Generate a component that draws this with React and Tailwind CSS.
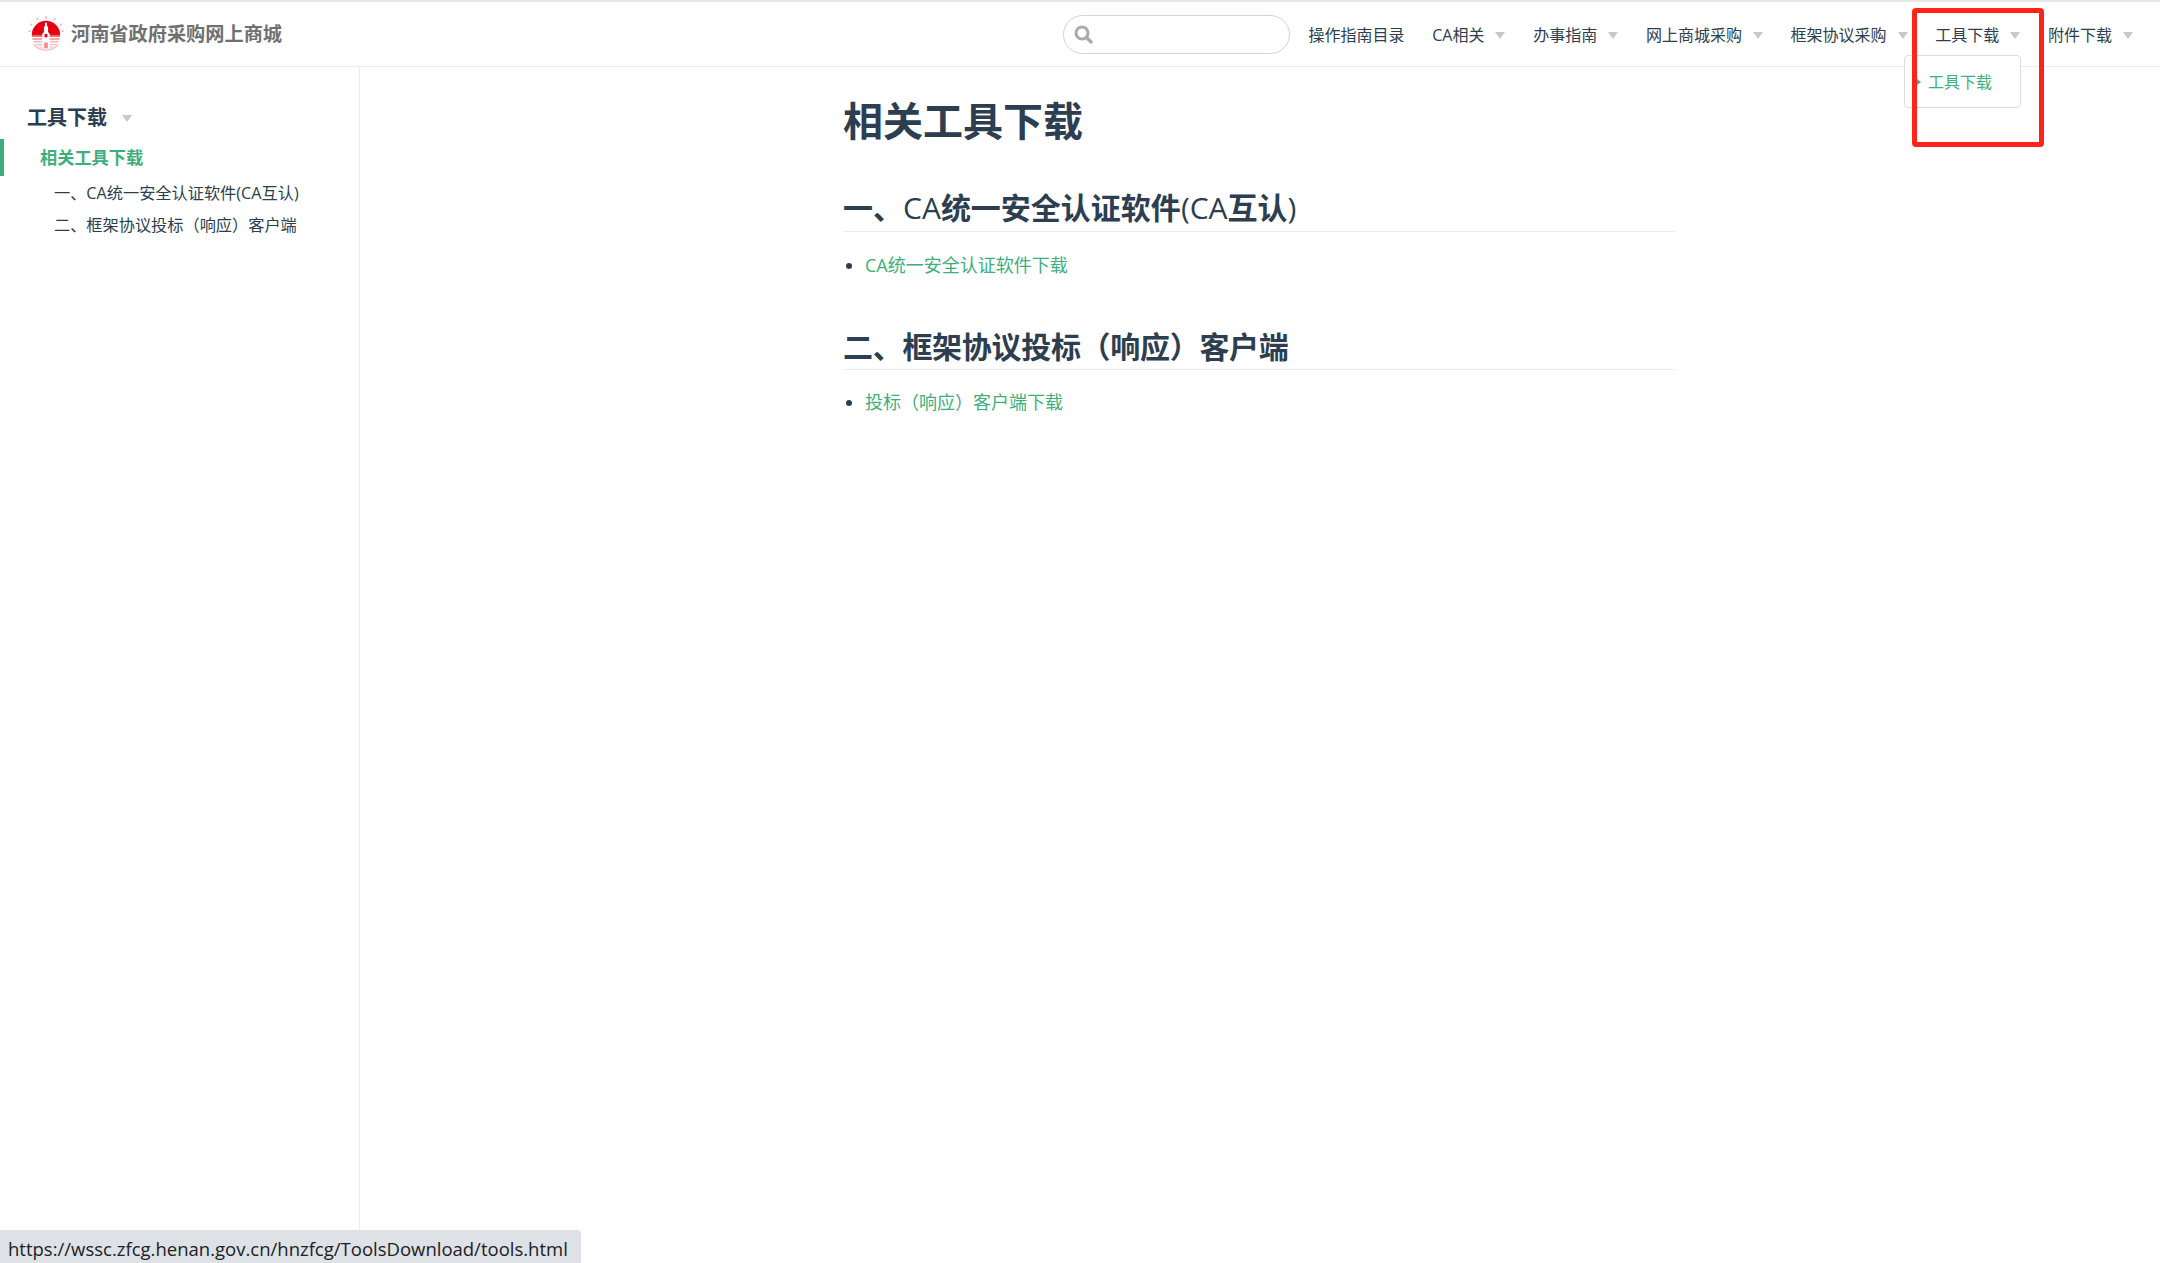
const NAV = [
  { label: '操作指南目录' },
  { label: 'CA相关', arrow: true },
  { label: '办事指南', arrow: true },
  { label: '网上商城采购', arrow: true },
  { label: '框架协议采购', arrow: true },
  { label: '工具下载', arrow: true },
  { label: '附件下载', arrow: true },
];

function Arrow() {
  return <span className="inline-block h-0 w-0 border-l-[5px] border-r-[5px] border-t-[7px] border-l-transparent border-r-transparent border-t-[#c8c8c8]" />;
}

function SearchIcon() {
  return (
    <svg width="19" height="19" viewBox="0 0 19 19" fill="none" stroke="#aaaaaa">
      <circle cx="8" cy="8" r="6" strokeWidth="3" />
      <path d="M12.5 12.5L17 17" strokeWidth="3.4" strokeLinecap="round" />
    </svg>
  );
}

function Logo() {
  return (
    <svg width="36" height="36" viewBox="0 0 38 38" className="shrink-0">
      <defs>
        <clipPath id="disc"><circle cx="19" cy="20" r="15" /></clipPath>
      </defs>
      {/* rays */}
      <g fill="#f7b4b4">
        <circle cx="19" cy="1.5" r="1.2" />
        <circle cx="10" cy="3" r="1.2" />
        <circle cx="28" cy="3" r="1.2" />
        <circle cx="3.5" cy="9" r="1.2" />
        <circle cx="34.5" cy="9" r="1.2" />
        <circle cx="1.5" cy="16" r="1.1" />
        <circle cx="36.5" cy="16" r="1.1" />
      </g>
      <g clipPath="url(#disc)">
        <rect x="3" y="4" width="32" height="16" fill="#e60012" />
        <rect x="3" y="20" width="32" height="2" fill="#f15a5f" />
        <rect x="3" y="23.5" width="32" height="1.6" fill="#f58f8f" />
        <rect x="3" y="26.5" width="32" height="1.4" fill="#f8abab" />
        <rect x="3" y="29.5" width="32" height="1.3" fill="#f9bcbc" />
        <rect x="3" y="32" width="32" height="2" fill="#fad0d0" />
      </g>
      <path d="M18 7h2v3l1.2 2v5l1.8 2v15h-8V19l1.8-2v-5L18 10z" fill="#fff" />
      <rect x="17.5" y="19" width="3" height="3.5" fill="#e60012" />
      <rect x="17" y="28" width="4" height="6" fill="#f58f8f" />
      <path d="M6 30c3 4 8 6 13 6s10-2 13-6" fill="none" stroke="#f9bcbc" strokeWidth="1.5" />
    </svg>
  );
}

export default function App() {
  return (
    <div className="relative flex h-screen flex-col overflow-hidden bg-white font-['Open_Sans','Noto_Sans_CJK_SC',sans-serif] text-[#2c3e50]">
      <div className="h-[2px] bg-[#e6e6e6]" />

      {/* header */}
      <header className="flex h-[65px] shrink-0 items-center border-b border-[#eaecef] pl-[28px] pr-[27px]">
        <Logo />
        <span className="ml-[7px] pt-px text-[19.2px] font-semibold text-[#707070]">河南省政府采购网上商城</span>
        <div className="ml-auto flex h-[39px] w-[227px] items-center rounded-full border border-[#cfd4db] pl-[10px]">
          <SearchIcon />
        </div>
        <nav className="ml-[19px] flex items-center gap-[27.7px] pt-[2px] text-[16px]">
          {NAV.map((item) => (
            <a key={item.label} className="flex items-center gap-[11px] whitespace-nowrap leading-[24px]">
              {item.label}
              {item.arrow && <Arrow />}
            </a>
          ))}
        </nav>
      </header>

      <div className="flex min-h-0 flex-1">
        {/* sidebar */}
        <aside className="w-[360px] shrink-0 border-r border-[#eaecef] pt-[37px]">
          <div className="flex items-center gap-[15px] pl-[27px] text-[20px] font-bold leading-[28px]">
            工具下载
            <Arrow />
          </div>
          <div className="mt-[7px] mb-px flex h-[37px] items-center border-l-4 border-[#3eaf7c] pl-[36px] text-[17.2px] font-bold text-[#3eaf7c]">
            相关工具下载
          </div>
          <ul className="pl-[54px] text-[16.2px] leading-[32px]">
            <li>一、CA统一安全认证软件(CA互认)</li>
            <li>二、框架协议投标（响应）客户端</li>
          </ul>
        </aside>

        {/* content */}
        <main className="flex-1 pl-[483px]">
          <div className="w-[832px]">
            <h1 className="mt-[32px] text-[40px] font-bold leading-[44px]">相关工具下载</h1>
            <h2 className="mt-[46px] border-b border-[#eaecef] pb-[4px] text-[30px] font-semibold leading-[38px]">
              一、<span className="font-normal">CA</span>统一安全认证软件<span className="font-normal">(CA</span>互认<span className="font-normal">)</span>
            </h2>
            <ul className="mt-[19px] list-disc pl-[22px] text-[18px] leading-[28px]">
              <li><a className="text-[#3eaf7c]">CA统一安全认证软件下载</a></li>
            </ul>
            <h2 className="mt-[49px] border-b border-[#eaecef] pb-[3px] text-[30px] font-semibold leading-[38px] tracking-[-0.3px]">二、框架协议投标（响应）客户端</h2>
            <ul className="mt-[18px] list-disc pl-[22px] text-[18px] leading-[28px]">
              <li><a className="text-[#3eaf7c]">投标（响应）客户端下载</a></li>
            </ul>
          </div>
        </main>
      </div>

      {/* open dropdown */}
      <div className="absolute left-[1904px] top-[55px] flex h-[53px] w-[117px] items-center rounded border border-[#dddddd] bg-white pl-[23px] text-[16px] text-[#3eaf7c]">
        <span className="absolute left-[12px] top-[23px] h-0 w-0 border-y-[3px] border-l-[4px] border-y-transparent border-l-[#3eaf7c]" />
        工具下载
      </div>

      {/* red annotation box */}
      <div className="pointer-events-none absolute left-[1912px] top-[8px] h-[139px] w-[132px] rounded-[4px] border-[5px] border-[#ff2419]" />

      {/* browser status bubble */}
      <div className="absolute bottom-0 left-0 flex h-[33px] w-[581px] items-center rounded-tr-[4px] bg-[#dee1e6] pl-[8px] pt-[5px] font-['Open_Sans',sans-serif] text-[18.5px] text-[#202124]">
        https://wssc.zfcg.henan.gov.cn/hnzfcg/ToolsDownload/tools.html
      </div>
    </div>
  );
}
